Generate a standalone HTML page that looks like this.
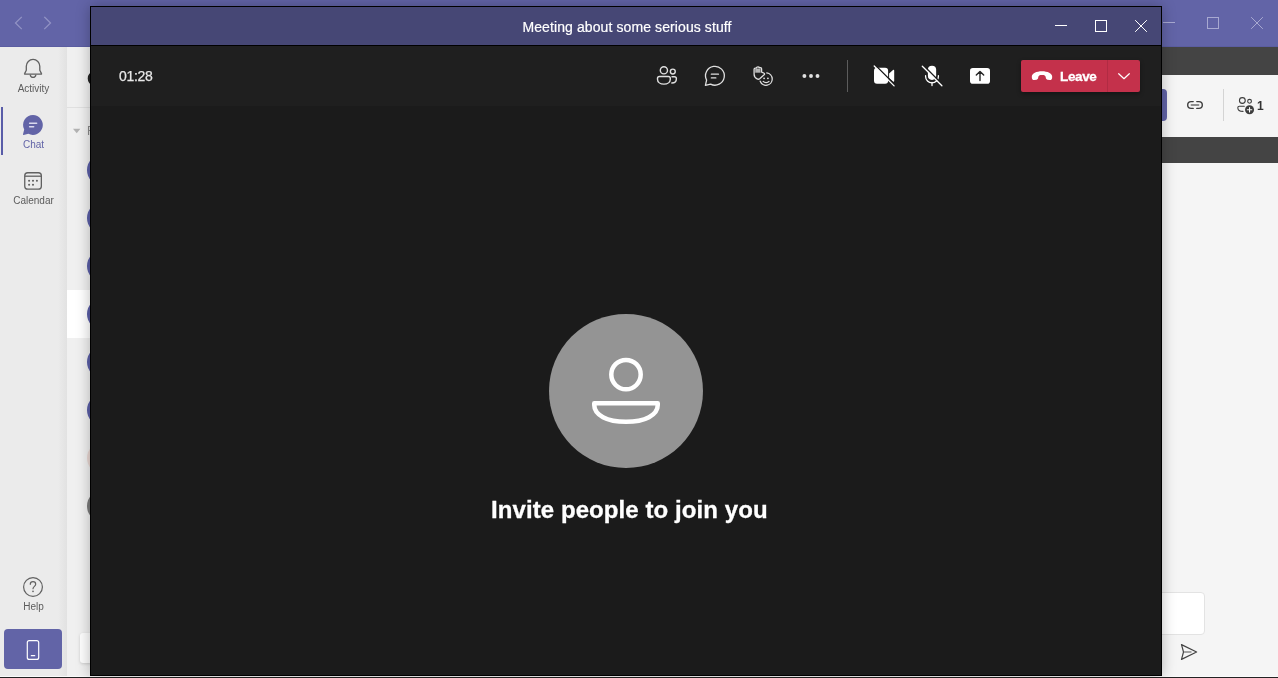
<!DOCTYPE html>
<html lang="en">
<head>
<meta charset="utf-8">
<title>Meeting about some serious stuff</title>
<style>
*{box-sizing:border-box;margin:0;padding:0}
html,body{width:1278px;height:678px;overflow:hidden;background:#f5f5f5;font-family:"Liberation Sans",sans-serif;}
.abs{position:absolute}
#app{position:absolute;left:0;top:0;width:1278px;height:678px;overflow:hidden;background:#f5f5f5}
#hdr{left:0;top:0;width:1278px;height:47px;background:#6264a7;border-bottom:1px solid #5b5da1}
#rail{left:0;top:47px;width:67px;height:629px;background:#ebebeb}
#list{left:67px;top:47px;width:1095px;height:629px;background:#f0f0f0}
#listshadow{left:58px;top:47px;width:9px;height:629px;background:linear-gradient(90deg,rgba(0,0,0,0),rgba(0,0,0,.04))}
#selrow{left:67px;top:290px;width:100px;height:48px;background:#fff}
#listdiv{left:67px;top:107px;width:100px;height:1px;background:#e0e0e0}
.av{width:32px;height:32px;border-radius:50%;left:87px;background:#5b5fa8}
#right{left:1162px;top:47px;width:116px;height:629px;background:#f5f5f5}
.band{left:1162px;width:116px;background:#444}
#botw{left:0;top:676px;width:1278px;height:1px;background:#fbfbfb}
#botd{left:0;top:677px;width:1278px;height:1px;background:#222}
.rl{font-size:10px;color:#5c5c5c;text-align:center;width:67px;left:0;white-space:nowrap}
#actbar{left:1px;top:107px;width:2px;height:48px;background:#595ca8}
#phonebtn{left:4px;top:629px;width:58px;height:40px;border-radius:4px;background:#6264a7}
#joinbtn{left:1100px;top:89px;width:67px;height:32px;border-radius:4px;background:#6264a7}
#rdiv{left:1223px;top:89px;width:1px;height:32px;background:#d4d4d4}
#one{left:1257px;top:99px;font-size:12px;font-weight:bold;color:#333}
#rbox{left:1100px;top:592px;width:105px;height:43px;border:1px solid #e3e3e3;border-radius:4px;background:#fff}
#lbox{left:80px;top:633px;width:60px;height:30px;border-radius:3px;background:#fdfdfd;box-shadow:0 1px 3px rgba(0,0,0,.15)}
#ctitle{left:87px;top:69px;font-size:18px;font-weight:bold;color:#242424}
#recent{left:87px;top:124px;font-size:12px;color:#8a8a8a}
#modal{left:90px;top:6px;width:1072px;height:670px;border:1px solid #000;background:#1b1b1b;box-shadow:0 0 13px rgba(0,0,0,.28)}
#mtitle{left:0;top:0;width:1070px;height:38px;background:#464775}
#mline{left:0;top:38px;width:1070px;height:1px;background:#000}
#mbar{left:0;top:39px;width:1070px;height:60px;background:#1f1f1f}
#ttext{-webkit-text-stroke:.2px #fff;left:1px;top:1px;width:1070px;height:38px;line-height:38px;text-align:center;color:#fff;font-size:14px;letter-spacing:.1px}
#timer{left:28px;top:61px;color:#e8e8e8;font-size:14px;letter-spacing:-.3px;-webkit-text-stroke:.25px #e8e8e8}
#tdiv{left:756px;top:53px;width:1px;height:32px;background:#5c5c5c}
#leave{left:930px;top:53px;width:119px;height:32px;background:#c4314b;border-radius:2px;box-shadow:0 2px 4px rgba(0,0,0,.35)}
#lvdiv{left:86px;top:0;width:1px;height:32px;background:#b12b43}
#lvtxt{-webkit-text-stroke:.3px #fff;left:39px;top:1px;line-height:32px;color:#fff;font-weight:bold;font-size:13.5px;letter-spacing:-.35px}
#bigav{left:458px;top:307px;width:154px;height:154px;border-radius:50%;background:#949494}
#invite{left:400px;top:489px;color:#fff;-webkit-text-stroke:.3px #fff;font-weight:bold;font-size:24px;white-space:nowrap;letter-spacing:.08px}
svg{position:absolute;overflow:visible}
.rl,#ttext,#timer,#lvtxt,#invite,#one,#ctitle,#recent{will-change:transform}
</style>
</head>
<body>
<div id="app">
  <div id="hdr" class="abs"></div>
  <div id="rail" class="abs"></div>
  <div id="list" class="abs"></div>
  <div id="listshadow" class="abs"></div>
  <div id="listdiv" class="abs"></div>
  <div id="selrow" class="abs"></div>
  <div id="ctitle" class="abs">Chat</div>
  <div id="recent" class="abs">Recent</div>
  <div class="abs av" style="top:154px"></div>
  <div class="abs av" style="top:202px"></div>
  <div class="abs av" style="top:250px"></div>
  <div class="abs av" style="top:298px"></div>
  <div class="abs av" style="top:346px"></div>
  <div class="abs av" style="top:394px"></div>
  <div class="abs av" style="top:442px;background:#e9d7d2"></div>
  <div class="abs av" style="top:490px;background:#7a7a7a"></div>
  <div id="lbox" class="abs"></div>

  <div id="actbar" class="abs"></div>
  <div class="abs rl" style="top:83px">Activity</div>
  <div class="abs rl" style="top:139px;color:#6264a7">Chat</div>
  <div class="abs rl" style="top:195px">Calendar</div>
  <div class="abs rl" style="top:601px">Help</div>
  <div id="phonebtn" class="abs"></div>

  <div id="right" class="abs"></div>
  <div class="abs band" style="top:47px;height:28px"></div>
  <div class="abs band" style="top:137px;height:26px"></div>
  <div id="joinbtn" class="abs"></div>
  <div id="rdiv" class="abs"></div>
  <div id="one" class="abs">1</div>
  <div id="rbox" class="abs"></div>
  <div id="botw" class="abs"></div>
  <div id="botd" class="abs"></div>

  <!-- background icons -->
  <svg id="bgicons" class="abs" style="left:0;top:0" width="1278" height="678" viewBox="0 0 1278 678" fill="none">
    <!-- header nav chevrons -->
    <g stroke="#9192c4" stroke-width="1.300" stroke-linecap="square" stroke-linejoin="miter">
      <path d="M21.300 17.300L15.500 23L21.300 28.700"/>
      <path d="M44.700 17.300L50.500 23L44.700 28.700"/>
    </g>
    <!-- bg window controls -->
    <g stroke="#a8a9d1" stroke-width="1" shape-rendering="crispEdges">
      <line x1="1163" y1="22.500" x2="1175" y2="22.500"/>
      <rect x="1207.500" y="17.500" width="11" height="11"/>
    </g>
    <g stroke="#a8a9d1" stroke-width="1" stroke-linecap="square">
      <line x1="1251.500" y1="17.500" x2="1262.500" y2="28.500"/>
      <line x1="1262.500" y1="17.500" x2="1251.500" y2="28.500"/>
    </g>
    <!-- bell -->
    <g stroke="#616161" stroke-width="1.300" stroke-linejoin="round" stroke-linecap="round">
      <path d="M24.900 74.200C24.600 74.200 24.400 73.900 24.600 73.600L26.300 70.200V66.200A6.750 6.750 0 0 1 39.800 66.200V70.200L41.500 73.600C41.700 73.900 41.500 74.200 41.200 74.200Z"/>
      <path d="M30.300 75.100A2.800 2.800 0 0 0 35.800 75.100"/>
    </g>
    <!-- chat filled -->
    <path d="M33 115.100A9.900 9.900 0 1 1 28.400 133.800L23.600 134.900C23.200 135 22.900 134.700 23 134.300L24.200 129.600A9.900 9.900 0 0 1 33 115.100Z" fill="#6264a7"/>
    <g stroke="#d9daee" stroke-width="1.400" stroke-linecap="round">
      <line x1="29.600" y1="123.200" x2="36.700" y2="123.200"/>
      <line x1="29.600" y1="126.800" x2="33.700" y2="126.800"/>
    </g>
    <!-- calendar -->
    <g stroke="#616161" stroke-width="1.300">
      <rect x="24.750" y="172.750" width="16.600" height="16.400" rx="3"/>
      <line x1="24.750" y1="176.200" x2="41.350" y2="176.200"/>
    </g>
    <g fill="#616161">
      <circle cx="29.100" cy="180.800" r="1.050"/><circle cx="33" cy="180.800" r="1.050"/><circle cx="36.900" cy="180.800" r="1.050"/>
      <circle cx="29.100" cy="184.700" r="1.050"/><circle cx="33" cy="184.700" r="1.050"/>
    </g>
    <!-- help -->
    <circle cx="33" cy="587" r="9.400" stroke="#616161" stroke-width="1.200"/>
    <path d="M30.300 584.300C30.300 582.700 31.500 581.700 33 581.700C34.500 581.700 35.700 582.700 35.700 584.200C35.700 586.300 33 586.400 33 588.700" stroke="#616161" stroke-width="1.200" stroke-linecap="round"/>
    <circle cx="33" cy="591.300" r=".85" fill="#616161"/>
    <!-- phone btn glyph -->
    <rect x="27.300" y="640.600" width="11.400" height="18.800" rx="2" stroke="#fff" stroke-width="1.200"/>
    <line x1="31.300" y1="655.700" x2="34.700" y2="655.700" stroke="#fff" stroke-width="1.200" stroke-linecap="round"/>
    <!-- triangle -->
    <path d="M73 128.800H80.400L76.700 133.200Z" fill="#b3b3b3"/>
    <!-- link -->
    <g stroke="#3d3d3d" stroke-width="1.400" stroke-linecap="round">
      <path d="M1193.200 101.600H1191.100A3.400 3.400 0 0 0 1191.100 108.400H1193.200"/>
      <path d="M1196.800 101.600H1198.900A3.400 3.400 0 0 1 1198.900 108.400H1196.800"/>
      <line x1="1191.300" y1="105" x2="1198.700" y2="105" stroke="#6e6e6e"/>
    </g>
    <!-- people add -->
    <g stroke="#3d3d3d" stroke-width="1.100" stroke-linecap="round">
      <circle cx="1242.350" cy="100.500" r="2.900"/>
      <circle cx="1249.550" cy="101.300" r="1.900"/>
      <path d="M1244.300 106.200H1239.300A1.500 1.500 0 0 0 1237.800 107.700C1237.800 110 1239.700 111.400 1243 111.400"/>
    </g>
    <circle cx="1249.550" cy="109.750" r="4.500" fill="#3d3d3d"/>
    <path d="M1247.300 109.750H1251.800M1249.550 107.500V112" stroke="#fff" stroke-width="1.100" stroke-linecap="round"/>
    <!-- send -->
    <g stroke="#444" stroke-width="1.200" stroke-linejoin="round" stroke-linecap="round">
      <path d="M1181.500 644.600L1196.600 652L1181.500 659.400L1183.500 652Z"/>
      <line x1="1184.500" y1="652" x2="1191" y2="652" stroke="#888" stroke-width="1.400"/>
    </g>
  </svg>

  <div id="modal" class="abs">
    <div id="mtitle" class="abs"></div>
    <div id="ttext" class="abs">Meeting about some serious stuff</div>
    <div id="mline" class="abs"></div>
    <div id="mbar" class="abs"></div>
    <div id="timer" class="abs">01:28</div>
    <div id="tdiv" class="abs"></div>
    <div id="leave" class="abs">
      <div id="lvdiv" class="abs"></div>
      <div id="lvtxt" class="abs">Leave</div>
    </div>
    <div id="bigav" class="abs"></div>
    <div id="invite" class="abs">Invite people to join you</div>
  </div>

  <!-- foreground icons (page pixel coordinates) -->
  <svg id="fgicons" class="abs" style="left:0;top:0" width="1278" height="678" viewBox="0 0 1278 678" fill="none">
    <!-- modal window controls -->
    <g stroke="#fff" stroke-width="1" shape-rendering="crispEdges">
      <line x1="1055" y1="25.5" x2="1067" y2="25.5"/>
      <rect x="1095.5" y="20.5" width="11" height="11"/>
    </g>
    <g stroke="#fff" stroke-width="1" stroke-linecap="square">
      <line x1="1135.5" y1="20.5" x2="1146.5" y2="31.5"/>
      <line x1="1146.5" y1="20.5" x2="1135.5" y2="31.5"/>
    </g>
    <!-- people -->
    <g stroke="#e0e0e0" stroke-width="1.4" stroke-linecap="round" stroke-linejoin="round">
      <circle cx="663.9" cy="70.3" r="3.6"/>
      <circle cx="672.8" cy="71.6" r="2.45"/>
      <path d="M659.5 76.5H668.3a2 2 0 0 1 2 2V79.2c0 2.9-2.6 4.9-6.4 4.9s-6.4-2-6.4-4.9V78.5a2 2 0 0 1 2-2Z"/>
      <path d="M672 76.7H674.4a2 2 0 0 1 2 2c0 2.7-1.7 4.3-4.6 4.3"/>
    </g>
    <!-- chat -->
    <g stroke="#e0e0e0" stroke-width="1.3" stroke-linejoin="round" stroke-linecap="round">
      <path d="M710.6 84.1A9.4 9.4 0 1 0 706.6 80.1L705.4 85.4Z"/>
      <line x1="711.4" y1="74.15" x2="718.4" y2="74.15" stroke-width="1.4"/>
      <line x1="711.4" y1="77.9" x2="715.8" y2="77.9" stroke-width="1.4"/>
    </g>
    <!-- reactions -->
    <g stroke="#e0e0e0" stroke-width="1.3" stroke-linejoin="round" stroke-linecap="round">
      <path d="M754.1 69.300Q754.1 68.100 755.200 68.100L756.300 68.100Q756.500 66.800 757.900 66.800Q759.200 66.800 759.500 67.700Q761.600 67.300 761.600 69.100L761.600 72.100L763.700 73Q765.200 73.700 764.100 74.800L759.700 78.800Q758.500 79.700 757.100 78.900Q754.100 77.400 754.100 74.300Z"/>
      <path d="M755.200 68.500h5.400v4.200h-5.400Z" fill="#b4b4b4" stroke="none"/>
      <path d="M766.8 72.9A6.200 6.200 0 1 1 760.200 81.200"/>
      <path d="M763.200 81.400c.7.800 1.700 1.200 2.900 1.200s2.200-.4 2.900-1.200"/>
    </g>
    <circle cx="764.100" cy="78.300" r=".9" fill="#e0e0e0"/>
    <circle cx="767.900" cy="78.300" r=".9" fill="#e0e0e0"/>
    <!-- more -->
    <g fill="#e0e0e0">
      <circle cx="804.4" cy="76.050" r="1.950"/>
      <circle cx="811.000" cy="76.050" r="1.950"/>
      <circle cx="817.500" cy="76.050" r="1.950"/>
    </g>
    <!-- camera off -->
    <g>
      <rect x="874" y="67.800" width="14.100" height="15.900" rx="3" fill="#fff"/>
      <path d="M889.100 73.600L893 70c.5-.5 1.200-.2 1.200.5V81c0 .700-.7 1-1.200.5l-3.900-3.600Z" fill="#fff"/>
      <line x1="875.300" y1="65.300" x2="895.300" y2="85.300" stroke="#1f1f1f" stroke-width="1.600"/>
      <line x1="874.200" y1="66" x2="894.100" y2="85.900" stroke="#fff" stroke-width="1.300" stroke-linecap="round"/>
    </g>
    <!-- mic off -->
    <g>
      <rect x="927.900" y="65.700" width="8.250" height="14.200" rx="4.120" fill="#fff"/>
      <path d="M925.600 75.700v.7a6.400 6.400 0 0 0 12.800 0v-.7" stroke="#fff" stroke-width="1.300" stroke-linecap="round"/>
      <line x1="932" y1="82.500" x2="932" y2="85.600" stroke="#fff" stroke-width="1.300" stroke-linecap="round"/>
      <line x1="923.300" y1="65.400" x2="943.100" y2="85.200" stroke="#1f1f1f" stroke-width="1.600"/>
      <line x1="922.300" y1="66.200" x2="941.900" y2="85.800" stroke="#fff" stroke-width="1.300" stroke-linecap="round"/>
    </g>
    <!-- share -->
    <g>
      <rect x="970" y="68.100" width="20" height="15.600" rx="2.800" fill="#fff"/>
      <path d="M980 80.600V71.700M976.300 75.100l3.700-3.700 3.700 3.700" stroke="#252525" stroke-width="1.400" stroke-linecap="round" stroke-linejoin="round"/>
    </g>
    <!-- leave phone -->
    <path d="M1042 71.200C1047.500 71.200 1052.200 73.300 1052.200 76.700C1052.200 79.100 1051.600 80.100 1049.700 80.100L1047.400 79.700C1046.200 79.400 1045.900 78.500 1045.800 77.500C1045.500 75.500 1044.500 75 1042 75C1039.500 75 1038.500 75.500 1038.200 77.500C1038.100 78.500 1037.800 79.400 1036.600 79.700L1034.300 80.100C1032.400 80.100 1031.800 79.100 1031.800 76.700C1031.800 73.300 1036.500 71.200 1042 71.200Z" fill="#fff"/>
    <path d="M1118.700 73.700L1124 78.700L1129.300 73.700" stroke="#fff" stroke-width="1.200" stroke-linecap="round" stroke-linejoin="round"/>
    <!-- avatar glyph -->
    <g stroke="#fff" stroke-width="4.500" stroke-linejoin="round">
      <circle cx="626" cy="374.600" r="14.700"/>
      <path d="M594.250 403.150H657.750V405C657.750 415 645 421.800 626 421.800C607 421.800 594.250 415 594.250 405Z"/>
    </g>
  </svg>
</div>
</body>
</html>
